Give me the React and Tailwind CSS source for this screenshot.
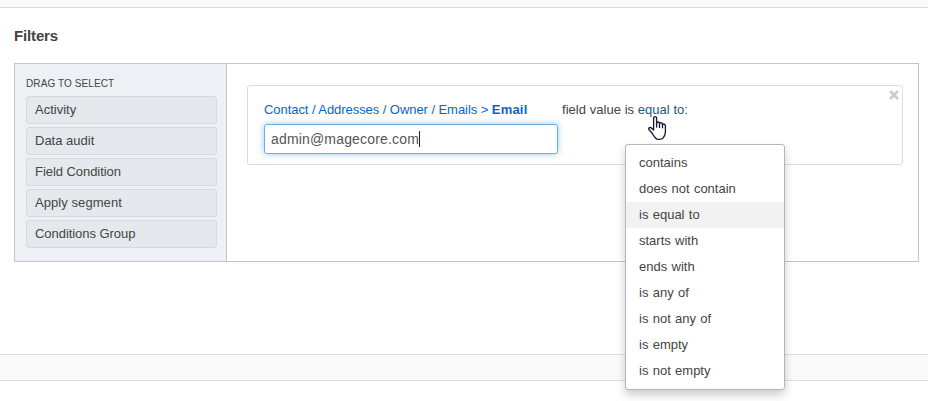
const conditions = [
  { name: 'Activity', spacing: 'tracking-normal' },
  { name: 'Data audit', spacing: 'tracking-normal' },
  { name: 'Field Condition', spacing: 'tracking-[-0.05px]' },
  { name: 'Apply segment', spacing: 'tracking-[0.07px]' },
  { name: 'Conditions Group', spacing: 'tracking-[-0.05px]' },
];

const operators = [
  'contains',
  'does not contain',
  'is equal to',
  'starts with',
  'ends with',
  'is any of',
  'is not any of',
  'is empty',
  'is not empty',
];

function HandCursor() {
  return (
    <svg className="absolute left-[648px] top-[115px]" width="19" height="26" viewBox="0 0 19 26" fill="#fff" stroke="#1b1a2e" strokeWidth="1.35" strokeLinejoin="round" strokeLinecap="round">
      <path d="M5.6 15V3.1C5.6 1.1 8.6 1.1 8.6 3.1V8.1C9.2 6.4 11.5 6.7 11.5 8.5C12.3 7.2 14.5 7.7 14.5 9.4C15.4 8.6 17.4 9.1 17.4 11V17.2C17.4 19.8 16 21.3 15.2 22.8C13.8 24.8 8.7 25 7.3 22.8C5.8 21 4.8 19.7 4 18L1.1 14.8C0 13.2 1.8 11.8 3.3 12.9Z" />
      <path d="M8.6 8.1V12M11.5 8.7V12.4M14.5 9.5V12.8" fill="none" />
    </svg>
  );
}

function OperatorMenu() {
  return (
    <ul className="absolute left-[625px] top-[144px] w-[160px] rounded-[3px] border border-[#b5b5b5] bg-white py-[5px] [word-spacing:0.7px] shadow-[0_5px_10px_rgba(0,0,0,0.2)]">
      {operators.map((name) => (
        <li
          key={name}
          className={
            name === 'is equal to'
              ? 'h-[26px] bg-[#f2f2f2] pl-[13px] leading-[26px]'
              : 'h-[26px] pl-[13px] leading-[26px]'
          }
        >
          {name}
        </li>
      ))}
    </ul>
  );
}

export default function App() {
  return (
    <div className="relative flex h-[401px] w-[928px] flex-col overflow-hidden bg-white font-['Liberation_Sans',Arial,sans-serif] text-[13px] text-[#444]">
      <div className="h-2 shrink-0 border-b border-[#ddd] bg-[#fafafa]" />
      <h2 className="mt-[18px] h-5 pl-[14px] text-[15px] font-bold leading-5 tracking-[-0.15px]">Filters</h2>

      <div className="ml-[14px] mt-[17px] flex h-[199px] w-[905px] shrink-0 border border-[#c4c4c4]">
        <aside className="w-[212px] shrink-0 border-r border-[#c4c4c4] bg-[#edf1f5] pl-[11px] pt-[12px]">
          <h3 className="h-5 text-[10px] leading-[16px] tracking-[0.1px]">DRAG TO SELECT</h3>
          <ul className="flex flex-col gap-[3px]">
            {conditions.map(({ name, spacing }) => (
              <li key={name} className={`h-7 w-[191px] rounded-[3px] border border-[#d4dae0] bg-[#e5e8ed] pl-2 leading-[26px] ${spacing}`}>
                {name}
              </li>
            ))}
          </ul>
        </aside>

        <div className="flex-1 pl-5 pt-[21px]">
          <div className="flex h-20 w-[656px] rounded-[3px] border border-[#ddd] pl-4 pt-[14px]">
            <div className="w-[298px]">
              <div className="h-6 whitespace-nowrap leading-[20px] tracking-[-0.06px] text-[#0a64c8]">
                Contact / Addresses / Owner / Emails &gt; <b className="tracking-[0.2px]">Email</b>
              </div>
              <div className="flex h-[30px] w-[294px] items-center rounded-[3px] border border-[#66afe9] bg-white pl-[6px] text-[14px] tracking-[0.17px] text-[#555] shadow-[0_0_6px_rgba(82,168,236,0.6)]">
                admin@magecore.com
                <span className="h-4 w-px bg-[#222]" />
              </div>
            </div>
            <div className="whitespace-nowrap leading-[20px] tracking-[0.04px]">
              field value is <span className="text-[#25567b]">equal to</span>:
            </div>
            <svg className="-mt-[10px] ml-auto mr-[3px]" width="10" height="10" viewBox="0 0 10 10" stroke="#ccc" strokeWidth="2.7">
              <path d="M1 1L9 9M9 1L1 9" />
            </svg>
          </div>
        </div>
      </div>

      <div className="mt-[92px] h-[27px] shrink-0 border-y border-[#ddd] bg-[#fafafa]" />

      <OperatorMenu />
      <HandCursor />
    </div>
  );
}
